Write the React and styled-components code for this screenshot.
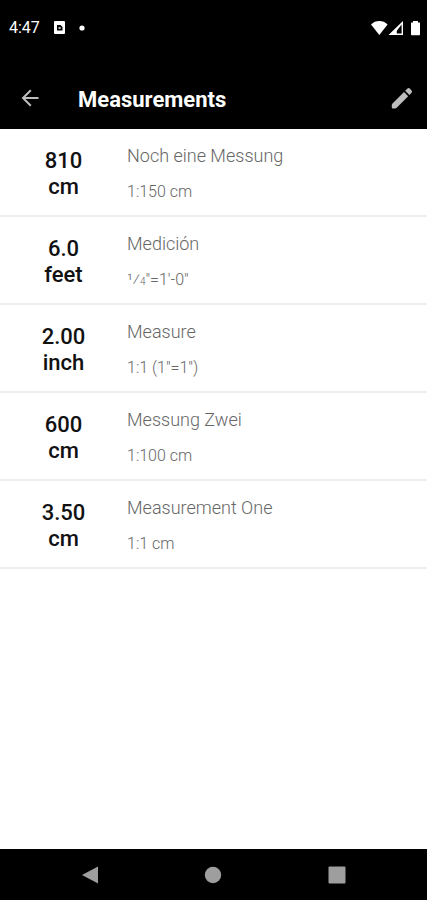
import React from 'react'
import styled, { createGlobalStyle } from 'styled-components'

const GlobalStyle = createGlobalStyle`
    *, *::before, *::after {
        box-sizing: border-box;
    }

    body {
        margin: 0;
        background: #FFFFFF;
        font-family: Roboto, "Noto Sans", sans-serif;
    }
`

const Screen = styled.div`
    display: flex;
    flex-direction: column;
    min-height: 100vh;
`

const StatusBar = styled.div`
    display: flex;
    align-items: center;
    justify-content: space-between;
    height: 55px;
    padding: 0 7px 0 9px;
    background: #000000;
    color: #FFFFFF;

    svg {
        display: block;
    }
`

const StatusGroup = styled.div`
    display: flex;
    align-items: center;
    gap: 14px;
`

const Clock = styled.span`
    font-size: 16px;
    line-height: 20px;
`

const TopBar = styled.header`
    display: flex;
    align-items: center;
    height: 74px;
    padding: 12px 9px 0 14px;
    background: #000000;
    color: #FFFFFF;
`

const Title = styled.h1`
    flex: 1;
    margin: 0;
    padding: 4px 0 0 32px;
    font-size: 22px;
    font-weight: 700;
    line-height: 28px;
`

const IconButton = styled.button`
    display: flex;
    align-items: center;
    justify-content: center;
    width: 32px;
    height: 32px;
    padding: 0;
    border: none;
    background: none;
    color: ${props => props.$color || '#BDBDBD'};
    cursor: pointer;
`

const List = styled.ul`
    flex: 1;
    margin: 0;
    padding: 0;
    list-style: none;
`

const Row = styled.li`
    display: grid;
    grid-template-columns: 127px 1fr;
    height: 88px;
    border-bottom: 2px solid #EEEEEE;
`

const Value = styled.div`
    padding-top: 19px;
    color: #111111;
    font-size: 22px;
    font-weight: 500;
    line-height: 26px;
    text-align: center;

    >span {
        display: block;
    }
`

const Details = styled.div`
    padding-top: 15px;
    color: #666666;
    font-weight: 300;
`

const Name = styled.div`
    font-size: 18px;
    line-height: 24px;
`

const Scale = styled.div`
    margin-top: 14px;
    font-size: 16px;
    line-height: 20px;
`

const Denominator = styled.span`
    font-size: 10px;
`

const NavBar = styled.nav`
    display: grid;
    grid-template-columns: repeat(3, 1fr);
    align-items: center;
    justify-items: center;
    height: 51px;
    padding: 0 28px;
    background: #000000;
`

const measurements = [
    { value: '810', unit: 'cm', name: 'Noch eine Messung', scale: '1:150 cm' },
    { value: '6.0', unit: 'feet', name: 'Medición', scale: <>¹⁄<Denominator>4</Denominator>"=1'-0"</> },
    { value: '2.00', unit: 'inch', name: 'Measure', scale: '1:1 (1"=1")' },
    { value: '600', unit: 'cm', name: 'Messung Zwei', scale: '1:100 cm' },
    { value: '3.50', unit: 'cm', name: 'Measurement One', scale: '1:1 cm' },
]

const NoticeIcon = () => (
    <svg width='11' height='13' viewBox='0 0 11 13'>
        <rect width='11' height='13' rx='1' fill='#FFFFFF'/>
        <path d='M3 4h3.500L8.500 6v3.500H3z' fill='#000000'/>
        <rect x='4.500' y='6' width='2.200' height='2' fill='#BBBBBB'/>
    </svg>
)

const DotIcon = () => (
    <svg width='6' height='6' viewBox='0 0 6 6'>
        <circle cx='3' cy='3' r='2.6' fill='#FFFFFF'/>
    </svg>
)

const SystemIcons = () => (
    <svg width='49' height='16' viewBox='0 0 49 16' fill='#FFFFFF'>
        <path d='M0 4.4C2.400 2.200 5 1 8.300 1s5.900 1.200 8.300 3.400L8.300 15z'/>
        <path fillRule='evenodd' d='M32 1v14H17.500zM30.600 4.600l-4.800 6.200v2.600h4.800z'/>
        <path d='M42 1h5v1.500h1.500q.5 0 .5.500v11.500q0 .8-.8.8h-7.400q-.8 0-.8-.8V3q0-.5.500-.5H42z'/>
    </svg>
)

const BackIcon = () => (
    <svg width='18' height='18' viewBox='0 0 18 18' fill='none' stroke='currentColor' strokeWidth='2'>
        <path d='M17.500 9H2M9.800 1.200L2 9l7.800 7.800'/>
    </svg>
)

const EditIcon = () => (
    <svg width='22' height='22' viewBox='0 0 22 22' fill='currentColor'>
        <path d='M.8 18.200q0-1 .7-1.700L13 5l4.200 4.200L5.700 20.700q-.7.700-1.700.7H1.600q-.8 0-.8-.8z'/>
        <path d='M14.200 3.800l2-2q1.400-1.400 2.800 0l1.400 1.400q1.400 1.400 0 2.800l-2 2z'/>
    </svg>
)

const App = () => (<>
    <GlobalStyle/>
    <Screen>
        <StatusBar>
            <StatusGroup>
                <Clock>4:47</Clock>
                <NoticeIcon/>
                <DotIcon/>
            </StatusGroup>
            <SystemIcons/>
        </StatusBar>
        <TopBar>
            <IconButton aria-label='Back'>
                <BackIcon/>
            </IconButton>
            <Title>Measurements</Title>
            <IconButton aria-label='Edit'>
                <EditIcon/>
            </IconButton>
        </TopBar>
        <List>
            {measurements.map(item => (
                <Row key={item.name}>
                    <Value>
                        <span>{item.value}</span>
                        <span>{item.unit}</span>
                    </Value>
                    <Details>
                        <Name>{item.name}</Name>
                        <Scale>{item.scale}</Scale>
                    </Details>
                </Row>
            ))}
        </List>
        <NavBar>
            <IconButton $color='#9E9E9E' aria-label='Back'>
                <svg width='18' height='18' viewBox='0 0 18 18' fill='currentColor'>
                    <path d='M17 .5v17L1 9z'/>
                </svg>
            </IconButton>
            <IconButton $color='#9E9E9E' aria-label='Home'>
                <svg width='18' height='18' viewBox='0 0 18 18' fill='currentColor'>
                    <circle cx='9' cy='9' r='8.200'/>
                </svg>
            </IconButton>
            <IconButton $color='#9E9E9E' aria-label='Recent apps'>
                <svg width='18' height='18' viewBox='0 0 18 18' fill='currentColor'>
                    <rect x='.5' y='.5' width='17' height='17' rx='1'/>
                </svg>
            </IconButton>
        </NavBar>
    </Screen>
</>)

export default App
